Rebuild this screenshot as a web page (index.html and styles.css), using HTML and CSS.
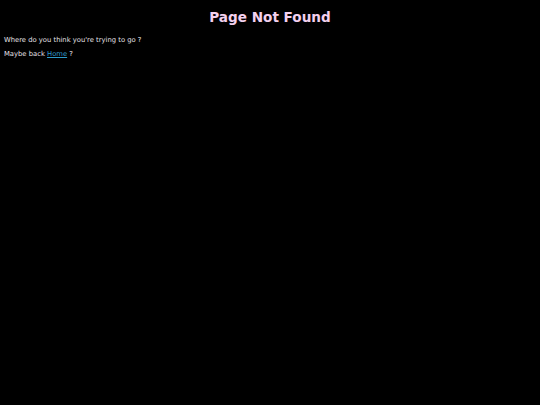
FILE: index.html
```html
<!DOCTYPE html>
<html>
<head>
<meta charset="utf-8">
<link rel="stylesheet" href="styles.css">
</head>
<body>
<h1 class="title">Page Not Found</h1>
<p class="line">Where do you think you're trying to go ?</p>
<p class="line">Maybe back <a class="link" href="#">Home</a> ?</p>
</body>
</html>
```
FILE: styles.css
```css
html, body {
  background: #000;
}
body {
  margin: 0;
  padding: 8px 4px;
  font-family: "DejaVu Sans", sans-serif;
  color: #e6e0e6;
}
.title {
  margin: 0 0 10px;
  text-align: center;
  font-size: 13.6px;
  font-weight: bold;
  color: #f3d0ee;
  line-height: 18px;
}
.line {
  margin: 0 0 6px;
  font-size: 6.8px;
  line-height: 8px;
}
.link {
  color: #2f9ccc;
}
```
